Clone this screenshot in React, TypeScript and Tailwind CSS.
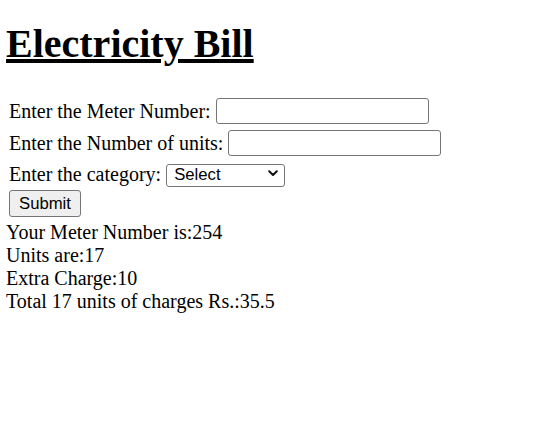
import { useState } from 'react';

export default function App() {
  const [meter, setMeter] = useState('');
  const [units, setUnits] = useState('');
  const [category, setCategory] = useState('');

  return (
    <div className="min-h-screen bg-white pl-[6px] pt-[21px] font-['Liberation_Serif',serif] text-black">
      <h1 className="text-[40px] font-bold leading-[46px] underline">Electricity Bill</h1>

      {/* Bill form */}
      <form className="mt-[28px] flex flex-col text-[20px] leading-[23px]" onSubmit={(e) => e.preventDefault()}>
        <div className="flex h-[32px] items-center pl-[3px]">
          <label className="whitespace-pre">Enter the Meter Number: </label>
          <input
            value={meter}
            onChange={(e) => setMeter(e.target.value)}
            className="h-[26px] w-[213px] rounded-[3px] border border-[#767676] bg-white px-[2px] font-['Liberation_Sans',sans-serif] text-[16.7px]"
          />
        </div>
        <div className="flex h-[32px] items-center pl-[3px]">
          <label className="whitespace-pre">Enter the Number of units: </label>
          <input
            value={units}
            onChange={(e) => setUnits(e.target.value)}
            className="h-[26px] w-[213px] rounded-[3px] border border-[#767676] bg-white px-[2px] font-['Liberation_Sans',sans-serif] text-[16.7px]"
          />
        </div>
        <div className="flex h-[31px] items-center pl-[3px]">
          <label className="whitespace-pre">Enter the category: </label>
          <div className="relative">
            <select
              value={category}
              onChange={(e) => setCategory(e.target.value)}
              className="h-[23px] w-[119px] appearance-none rounded-[3px] border border-[#767676] bg-white pl-[7px] font-['Liberation_Sans',sans-serif] text-[16.7px] leading-[20px]"
            >
              <option value="">Select</option>
              <option value="domestic">Domestic</option>
              <option value="commercial">Commercial</option>
            </select>
            <svg
              className="pointer-events-none absolute left-[102px] top-[8px]"
              width="10"
              height="7"
              viewBox="0 0 10 7"
              fill="none"
            >
              <path d="M1.2 1.2 5 5 8.8 1.2" stroke="#111" strokeWidth="2" strokeLinecap="round" strokeLinejoin="round" />
            </svg>
          </div>
        </div>
        <div className="flex h-[27px] pl-[3px]">
          <button
            type="submit"
            className="h-[27px] w-[72px] rounded-[3px] border border-[#767676] bg-[#efefef] font-['Liberation_Sans',sans-serif] text-[16.7px] leading-[20px]"
          >
            Submit
          </button>
        </div>
      </form>

      {/* Result */}
      <div className="mt-[4px] text-[20px] leading-[23px]">
        <div>Your Meter Number is:254</div>
        <div>Units are:17</div>
        <div>Extra Charge:10</div>
        <div>Total 17 units of charges Rs.:35.5</div>
      </div>
    </div>
  );
}
